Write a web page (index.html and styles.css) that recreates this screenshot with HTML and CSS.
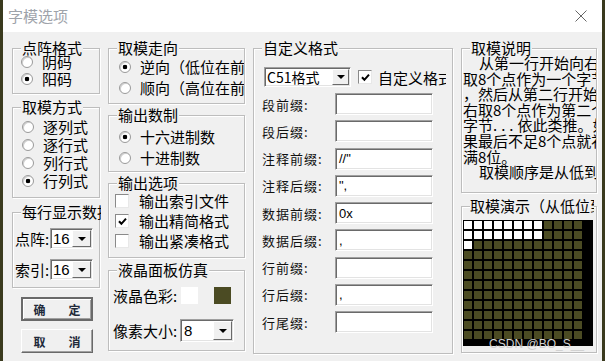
FILE: index.html
```html
<!DOCTYPE html>
<html lang="zh-CN">
<head>
  <meta charset="UTF-8" />
  <title>字模选项</title>
  <link rel="stylesheet" href="styles.css">
</head>
<body>
  <div class="window">
    <div class="titlebar">
      <span class="title">字模选项</span>
      <svg class="close" width="12" height="12" viewBox="0 0 12 12">
        <path d="M0.5 0.5 L11.5 11.5 M11.5 0.5 L0.5 11.5" stroke="#666" stroke-width="1" fill="none"/>
      </svg>
    </div>

    <div class="client">
      <!-- 第一列 -->
      <div class="col">
        <div class="group g-dot">
          <div class="group-title">点阵格式</div>
          <div class="opts">
            <div class="opt"><span class="radio"></span>阴码</div>
            <div class="opt"><span class="radio on"></span>阳码</div>
          </div>
        </div>

        <div class="group g-mode">
          <div class="group-title">取模方式</div>
          <div class="opts">
            <div class="opt"><span class="radio"></span>逐列式</div>
            <div class="opt"><span class="radio"></span>逐行式</div>
            <div class="opt"><span class="radio"></span>列行式</div>
            <div class="opt"><span class="radio on"></span>行列式</div>
          </div>
        </div>

        <div class="group g-row">
          <div class="group-title">每行显示数据</div>
          <div class="fields">
            <div class="field">
              <span class="field-label">点阵:</span>
              <div class="combo combo-sm"><span class="combo-value">16</span><span class="combo-btn"><i class="arrow"></i></span></div>
            </div>
            <div class="field">
              <span class="field-label">索引:</span>
              <div class="combo combo-sm"><span class="combo-value">16</span><span class="combo-btn"><i class="arrow"></i></span></div>
            </div>
          </div>
        </div>

        <div class="btns">
          <button class="btn btn-default"><span>确</span><span>定</span></button>
          <button class="btn"><span>取</span><span>消</span></button>
        </div>
      </div>

      <!-- 第二列 -->
      <div class="col">
        <div class="group g-dir">
          <div class="group-title">取模走向</div>
          <div class="opts">
            <div class="opt"><span class="radio on"></span>逆向（低位在前）</div>
            <div class="opt"><span class="radio"></span>顺向（高位在前）</div>
          </div>
        </div>

        <div class="group g-radix">
          <div class="group-title">输出数制</div>
          <div class="opts">
            <div class="opt"><span class="radio on"></span>十六进制数</div>
            <div class="opt"><span class="radio"></span>十进制数</div>
          </div>
        </div>

        <div class="group g-out">
          <div class="group-title">输出选项</div>
          <div class="opts">
            <div class="opt"><span class="check"></span>输出索引文件</div>
            <div class="opt"><span class="check"><svg width="9" height="9" viewBox="0 0 9 9"><path d="M1 4.2 L3.4 6.8 L8 1.6" stroke="#000" stroke-width="2" fill="none"/></svg></span>输出精简格式</div>
            <div class="opt"><span class="check"></span>输出紧凑格式</div>
          </div>
        </div>

        <div class="group g-lcd">
          <div class="group-title">液晶面板仿真</div>
          <div class="lcd-row lcd-color">
            <span class="lcd-label">液晶色彩:</span>
            <span class="swatch swatch-bg"></span>
            <span class="swatch swatch-fg"></span>
          </div>
          <div class="lcd-row lcd-size">
            <span class="lcd-label">像素大小:</span>
            <div class="combo combo-px"><span class="combo-value">8</span><span class="combo-btn"><i class="arrow"></i></span></div>
          </div>
        </div>
      </div>

      <!-- 第三列 -->
      <div class="col">
        <div class="group g-custom">
          <div class="group-title">自定义格式</div>
          <div class="custom-head">
            <div class="combo combo-fmt"><span class="combo-value">C51格式</span><span class="combo-btn"><i class="arrow"></i></span></div>
            <span class="check"><svg width="9" height="9" viewBox="0 0 9 9"><path d="M1 4.2 L3.4 6.8 L8 1.6" stroke="#000" stroke-width="2" fill="none"/></svg></span>
            <span class="custom-check-label">自定义格式</span>
          </div>
          <div class="form">
            <span class="form-label">段前缀:</span><span class="edit"></span>
            <span class="form-label">段后缀:</span><span class="edit"></span>
            <span class="form-label">注释前缀:</span><span class="edit">//"</span>
            <span class="form-label">注释后缀:</span><span class="edit">",</span>
            <span class="form-label">数据前缀:</span><span class="edit">0x</span>
            <span class="form-label">数据后缀:</span><span class="edit">,</span>
            <span class="form-label">行前缀:</span><span class="edit"></span>
            <span class="form-label">行后缀:</span><span class="edit">,</span>
            <span class="form-label">行尾缀:</span><span class="edit"></span>
          </div>
        </div>
      </div>

      <!-- 第四列 -->
      <div class="col">
        <div class="group g-info">
          <div class="group-title">取模说明</div>
          <div class="info-text">
            <div class="indent">从第一行开始向右每</div>
            <div>取8个点作为一个字节</div>
            <div>，然后从第二行开始向</div>
            <div>右取8个点作为第二个</div>
            <div>字节<span class="dots">...</span>依此类推。如</div>
            <div>果最后不足8个点就补</div>
            <div>满8位。</div>
            <div class="indent">取模顺序是从低到高</div>
          </div>
        </div>

        <div class="group g-demo">
          <div class="group-title">取模演示（从低位到高位）</div>
          <div class="lcd">
            <div class="cells">
              <i class="w"></i><i class="w"></i><i class="w"></i><i class="w"></i><i class="w"></i><i class="w"></i><i class="w"></i><i class="w"></i><i></i><i></i><i></i><i></i>
              <i class="w"></i><i class="w"></i><i class="w"></i><i class="w"></i><i class="w"></i><i class="w"></i><i class="w"></i><i class="w"></i><i></i><i></i><i></i><i></i>
              <i class="w"></i><i></i><i></i><i></i><i></i><i></i><i></i><i></i><i></i><i></i><i></i><i></i>
              <i></i><i></i><i></i><i></i><i></i><i></i><i></i><i></i><i></i><i></i><i></i><i></i>
              <i></i><i></i><i></i><i></i><i></i><i></i><i></i><i></i><i></i><i></i><i></i><i></i>
              <i></i><i></i><i></i><i></i><i></i><i></i><i></i><i></i><i></i><i></i><i></i><i></i>
              <i></i><i></i><i></i><i></i><i></i><i></i><i></i><i></i><i></i><i></i><i></i><i></i>
              <i></i><i></i><i></i><i></i><i></i><i></i><i></i><i></i><i></i><i></i><i></i><i></i>
              <i></i><i></i><i></i><i></i><i></i><i></i><i></i><i></i><i></i><i></i><i></i><i></i>
              <i></i><i></i><i></i><i></i><i></i><i></i><i></i><i></i><i></i><i></i><i></i><i></i>
              <i></i><i></i><i></i><i></i><i></i><i></i><i></i><i></i><i></i><i></i><i></i><i></i>
              <i></i><i></i><i></i><i></i><i></i><i></i><i></i><i></i><i></i><i></i><i></i><i></i>
            </div>
          </div>
        </div>
      </div>
    </div>

    <span class="watermark">CSDN @BO_S__</span>
  </div>
</body>
</html>
```

FILE: styles.css
```css
body {
  margin: 0;
  background-color: #3a3a1e;
  font-family: "Noto Sans CJK SC", "Liberation Sans", sans-serif;
  color: #000;
}

.window {
  position: relative;
  width: 599px;
  height: 361px;
  margin-left: 3px;
  background-color: #f0f0f0;
  overflow: hidden;
}

.titlebar {
  height: 32px;
  background-color: #fff;
  display: flex;
  align-items: center;
  justify-content: space-between;
  padding: 0 15px 0 5px;
}

.title {
  font-size: 15px;
  line-height: 16px;
  color: #9ea3aa;
}

.client {
  display: grid;
  grid-template-columns: 88px 137px 200px 136px;
  column-gap: 8px;
  align-items: start;
  padding: 16px 0 0 9px;
}

/* 分组框 */
.group {
  box-sizing: border-box;
  border: 1px solid #bdbdbd;
  box-shadow: inset 1px 1px 0 #fff, 1px 1px 0 #fff;
}

.group-title {
  width: max-content;
  margin: -9px 0 0 8px;
  padding: 0 1px;
  background-color: #f0f0f0;
  font-size: 15px;
  line-height: 16px;
  white-space: nowrap;
  overflow: hidden;
}

.opts {
  overflow: hidden;
  white-space: nowrap;
}

.opt {
  display: flex;
  align-items: center;
  font-size: 15px;
  line-height: 16px;
}

.radio {
  flex: none;
  box-sizing: border-box;
  width: 12px;
  height: 12px;
  border-radius: 50%;
  border: 1px solid #9a9a9a;
  background: #fff;
  box-shadow: inset 1px 1px 0 #d0d0d0;
  margin-right: 9px;
}

.radio.on {
  background: radial-gradient(circle, #000 0 2px, #fff 2.6px);
}

.check {
  flex: none;
  box-sizing: border-box;
  width: 14px;
  height: 14px;
  border: 1px solid;
  border-color: #8a8a8a #e8e8e8 #e8e8e8 #8a8a8a;
  background: #fff;
  display: flex;
  align-items: center;
  justify-content: center;
  margin-right: 10px;
}

/* 第一列 */
.g-dot {
  height: 46px;
}

.g-dot .opts {
  margin-top: -3px;
  padding-left: 8px;
}

.g-dot .opt {
  height: 17px;
}

.g-mode {
  height: 91px;
  margin-top: 13px;
}

.g-mode .opts {
  margin-top: 3px;
  padding-left: 9px;
}

.g-mode .opt {
  height: 18px;
}

.g-row {
  height: 76px;
  margin-top: 14px;
}

.g-row .group-title {
  max-width: 78px;
}

.fields {
  display: flex;
  flex-direction: column;
  gap: 10px;
  padding: 8px 0 0 2px;
}

.field {
  display: flex;
  align-items: center;
  height: 21px;
}

.field-label {
  width: 35px;
  font-size: 15px;
}

/* 下拉框 */
.combo {
  box-sizing: border-box;
  display: flex;
  background-color: #fff;
  border: 1px solid;
  border-color: #a0a0a0 #fff #fff #a0a0a0;
  box-shadow: inset 1px 1px 0 #6a6a6a, inset -1px -1px 0 #e3e3e3;
}

.combo-value {
  flex: 1;
  padding: 0 0 0 3px;
  font-size: 14px;
  display: flex;
  align-items: center;
}

.combo-btn {
  box-sizing: border-box;
  width: 19px;
  margin: 1px;
  background-color: #f0f0f0;
  border: 1px solid;
  border-color: #fff #6a6a6a #6a6a6a #fff;
  display: flex;
  align-items: center;
  justify-content: center;
}

.arrow {
  width: 0;
  height: 0;
  border-left: 4px solid transparent;
  border-right: 4px solid transparent;
  border-top: 4px solid #000;
}

.combo-sm {
  width: 43px;
  height: 21px;
}

.combo-sm .combo-value {
  font-family: "Liberation Sans", sans-serif;
  font-size: 15px;
  padding-left: 2px;
}

.btns {
  display: flex;
  flex-direction: column;
  gap: 8px;
  margin: 9px 0 0 9px;
}

.btn {
  box-sizing: border-box;
  width: 72px;
  height: 24px;
  padding: 0;
  display: flex;
  align-items: center;
  justify-content: center;
  gap: 23px;
  background-color: #f0f0f0;
  border: 1px solid;
  border-color: #fff #696969 #696969 #fff;
  box-shadow: inset -1px -1px 0 #a0a0a0;
  font-family: "Noto Sans CJK SC", sans-serif;
  font-size: 12px;
  font-weight: bold;
  color: #222a3a;
}

.btn-default {
  border: 2px solid #6a6a6a;
  box-shadow: inset 1px 1px 0 #fff, inset -1px -1px 0 #a0a0a0;
}

/* 第二列 */
.g-dir {
  height: 56px;
}

.g-dir .opts,
.g-radix .opts {
  padding-left: 10px;
}

.g-dir .opt,
.g-radix .opt {
  height: 21px;
}

.g-radix {
  height: 57px;
  margin-top: 11px;
}

.g-radix .opts {
  margin-top: 3px;
}

.g-out {
  height: 75px;
  margin-top: 11px;
}

.g-out .opts {
  padding-left: 6px;
}

.g-out .opt {
  height: 20px;
}

.g-lcd {
  height: 81px;
  margin-top: 12px;
}

.lcd-row {
  display: flex;
  align-items: center;
  padding-left: 4px;
}

.lcd-color {
  height: 17px;
  margin-top: 9px;
}

.lcd-size {
  height: 23px;
  margin-top: 15px;
}

.lcd-label {
  width: 67px;
  font-size: 15px;
  white-space: nowrap;
}

.swatch {
  width: 17px;
  height: 17px;
}

.swatch-bg {
  margin-left: 1px;
  background-color: #fff;
}

.swatch-fg {
  margin-left: 16px;
  background-color: #4b4b23;
}

.combo-px {
  width: 54px;
  height: 23px;
}

.combo-px .combo-value {
  font-family: "Liberation Sans", sans-serif;
  font-size: 15px;
}

/* 第三列 */
.g-custom {
  height: 306px;
}

.custom-head {
  display: flex;
  align-items: center;
  height: 20px;
  margin-top: 11px;
  padding-left: 10px;
}

.combo-fmt {
  width: 87px;
  height: 20px;
  margin-right: 7px;
}

.combo-fmt .combo-value {
  font-size: 14px;
  padding-left: 2px;
}

.combo-fmt .combo-btn {
  width: 17px;
}

.custom-head .check {
  margin-right: 6px;
}

.custom-check-label {
  width: 68px;
  overflow: hidden;
  white-space: nowrap;
  font-size: 15px;
}

.form {
  display: grid;
  grid-template-columns: 73px 98px;
  grid-auto-rows: 22px;
  row-gap: 5.25px;
  margin-top: 6px;
  padding-left: 8px;
}

.form-label {
  display: flex;
  align-items: center;
  font-size: 13px;
  letter-spacing: 1px;
  color: #111;
}

.edit {
  box-sizing: border-box;
  display: flex;
  align-items: center;
  padding-left: 3px;
  background-color: #fff;
  border: 1px solid;
  border-color: #a0a0a0 #fff #fff #a0a0a0;
  box-shadow: inset 1px 1px 0 #6a6a6a, inset -1px -1px 0 #e3e3e3;
  font-family: "Liberation Sans", sans-serif;
  font-size: 13px;
}

/* 第四列 */
.g-info {
  height: 145px;
}

.info-text {
  margin-top: -1px;
  padding-left: 1px;
  font-size: 15px;
  line-height: 15.6px;
  white-space: nowrap;
  overflow: hidden;
}

.info-text .indent {
  text-indent: 16px;
}

.dots {
  letter-spacing: 4px;
}

.g-demo {
  height: 147px;
  margin-top: 13px;
}

.g-demo .group-title {
  max-width: 124px;
  padding: 0;
}

.lcd {
  width: 130px;
  height: 126px;
  box-sizing: border-box;
  margin: 6px 0 0 1px;
  padding: 1px 0 0 1px;
  background-color: #000;
}

.cells {
  display: grid;
  grid-template-columns: repeat(12, 8px);
  grid-auto-rows: 8px;
  gap: 2px;
}

.cells i {
  background-color: #4b4b23;
}

.cells i.w {
  background-color: #fff;
}

.watermark {
  position: absolute;
  right: 18px;
  bottom: 10px;
  font-family: "Liberation Sans", sans-serif;
  font-size: 12px;
  line-height: 14px;
  color: #cfcfcf;
}
```
